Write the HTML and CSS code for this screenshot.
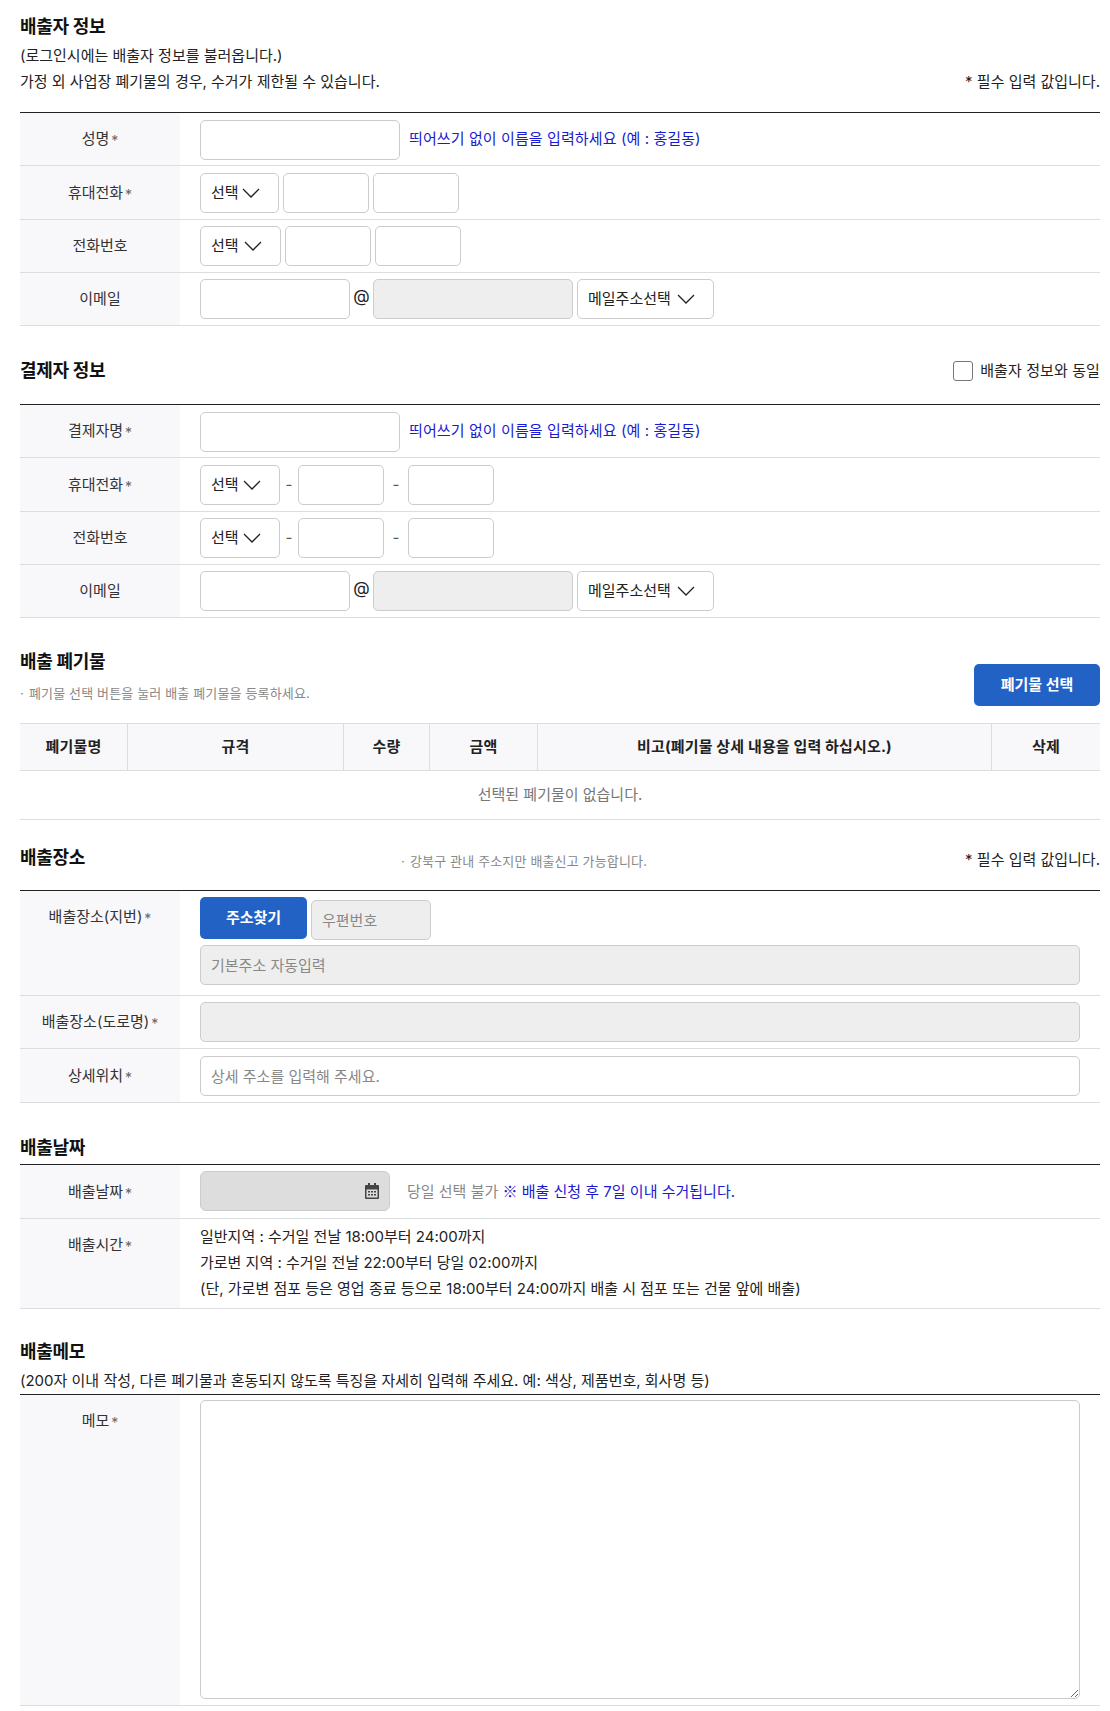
FILE: index.html
```html
<!DOCTYPE html>
<html lang="ko">
<head>
  <meta charset="utf-8">
  <title>배출 신청</title>
  <link rel="stylesheet" href="styles.css">
</head>
<body>
  <!-- 배출자 정보 -->
  <section class="sec sec-first">
    <h2 class="sec-title">배출자 정보</h2>
    <p class="sec-text">(로그인시에는 배출자 정보를 불러옵니다.)</p>
    <div class="sec-note">
      <p class="sec-text">가정 외 사업장 폐기물의 경우, 수거가 제한될 수 있습니다.</p>
      <p class="sec-text">* 필수 입력 값입니다.</p>
    </div>
  </section>
  <div class="form-table">
    <div class="row row-a">
      <div class="row-label">성명<span class="star">*</span></div>
      <div class="row-field">
        <input class="inp w-200" type="text">
        <span class="hint">띄어쓰기 없이 이름을 입력하세요 (예 : 홍길동)</span>
      </div>
    </div>
    <div class="row row-b">
      <div class="row-label">휴대전화<span class="star">*</span></div>
      <div class="row-field gap-4">
        <div class="sel w-79">선택<svg class="chev" viewBox="0 0 18 10"><path d="M1 1l8 8 8-8"/></svg></div>
        <input class="inp w-86" type="text">
        <input class="inp w-86" type="text">
      </div>
    </div>
    <div class="row">
      <div class="row-label">전화번호</div>
      <div class="row-field gap-4">
        <div class="sel w-81">선택<svg class="chev" viewBox="0 0 18 10"><path d="M1 1l8 8 8-8"/></svg></div>
        <input class="inp w-86" type="text">
        <input class="inp w-86" type="text">
      </div>
    </div>
    <div class="row">
      <div class="row-label">이메일</div>
      <div class="row-field">
        <input class="inp w-150" type="text">
        <span class="at">@</span>
        <input class="inp inp-off w-200" type="text" disabled>
        <div class="sel w-137 ml-4">메일주소선택<svg class="chev" viewBox="0 0 18 10"><path d="M1 1l8 8 8-8"/></svg></div>
      </div>
    </div>
  </div>

  <!-- 결제자 정보 -->
  <section class="sec sec-payer">
    <h2 class="sec-title">결제자 정보</h2>
    <label class="same"><span class="check"></span>배출자 정보와 동일</label>
  </section>
  <div class="form-table">
    <div class="row row-a">
      <div class="row-label">결제자명<span class="star">*</span></div>
      <div class="row-field">
        <input class="inp w-200" type="text">
        <span class="hint">띄어쓰기 없이 이름을 입력하세요 (예 : 홍길동)</span>
      </div>
    </div>
    <div class="row row-b">
      <div class="row-label">휴대전화<span class="star">*</span></div>
      <div class="row-field">
        <div class="sel w-80">선택<svg class="chev" viewBox="0 0 18 10"><path d="M1 1l8 8 8-8"/></svg></div>
        <span class="dash">-</span>
        <input class="inp w-86" type="text">
        <span class="dash dash-wide">-</span>
        <input class="inp w-86" type="text">
      </div>
    </div>
    <div class="row">
      <div class="row-label">전화번호</div>
      <div class="row-field">
        <div class="sel w-80">선택<svg class="chev" viewBox="0 0 18 10"><path d="M1 1l8 8 8-8"/></svg></div>
        <span class="dash">-</span>
        <input class="inp w-86" type="text">
        <span class="dash dash-wide">-</span>
        <input class="inp w-86" type="text">
      </div>
    </div>
    <div class="row">
      <div class="row-label">이메일</div>
      <div class="row-field">
        <input class="inp w-150" type="text">
        <span class="at">@</span>
        <input class="inp inp-off w-200" type="text" disabled>
        <div class="sel w-137 ml-4">메일주소선택<svg class="chev" viewBox="0 0 18 10"><path d="M1 1l8 8 8-8"/></svg></div>
      </div>
    </div>
  </div>

  <!-- 배출 폐기물 -->
  <section class="sec sec-waste">
    <div>
      <h2 class="sec-title">배출 폐기물</h2>
      <p class="sec-sub"><span class="dot">·</span>폐기물 선택 버튼을 눌러 배출 폐기물을 등록하세요.</p>
    </div>
    <button class="btn btn-waste" type="button">폐기물 선택</button>
  </section>
  <div class="list-head">
    <div class="col c-name">폐기물명</div>
    <div class="col c-spec">규격</div>
    <div class="col c-qty">수량</div>
    <div class="col c-price">금액</div>
    <div class="col c-note">비고(폐기물 상세 내용을 입력 하십시오.)</div>
    <div class="col c-del">삭제</div>
  </div>
  <div class="list-empty">선택된 폐기물이 없습니다.</div>

  <!-- 배출장소 -->
  <section class="sec sec-place">
    <h2 class="sec-title">배출장소</h2>
    <p class="sec-sub place-sub"><span class="dot">·</span>강북구 관내 주소지만 배출신고 가능합니다.</p>
    <p class="sec-text">* 필수 입력 값입니다.</p>
  </section>
  <div class="form-table">
    <div class="row row-top">
      <div class="row-label">배출장소(지번)<span class="star">*</span></div>
      <div class="row-field field-stack">
        <div class="addr-line">
          <button class="btn btn-addr" type="button">주소찾기</button>
          <input class="inp inp-off w-120" type="text" placeholder="우편번호" disabled>
        </div>
        <input class="inp inp-off w-full" type="text" placeholder="기본주소 자동입력" disabled>
      </div>
    </div>
    <div class="row">
      <div class="row-label">배출장소(도로명)<span class="star">*</span></div>
      <div class="row-field"><input class="inp inp-off w-full" type="text" disabled></div>
    </div>
    <div class="row row-b">
      <div class="row-label">상세위치<span class="star">*</span></div>
      <div class="row-field"><input class="inp w-full" type="text" placeholder="상세 주소를 입력해 주세요."></div>
    </div>
  </div>

  <!-- 배출날짜 -->
  <section class="sec sec-date">
    <h2 class="sec-title">배출날짜</h2>
  </section>
  <div class="form-table">
    <div class="row row-c">
      <div class="row-label">배출날짜<span class="star">*</span></div>
      <div class="row-field">
        <div class="date-box">
          <svg class="cal" viewBox="0 0 14 16">
            <path d="M3 0h2v2h4V0h2v2h2a1 1 0 0 1 1 1v12a1 1 0 0 1-1 1H1a1 1 0 0 1-1-1V3a1 1 0 0 1 1-1h2z" fill="#444"/>
            <path d="M1.5 6.5h11v8h-11z" fill="#ddd"/>
            <path d="M3 8h2v1.5H3zM6 8h2v1.5H6zM9 8h2v1.5H9zM3 11h2v1.5H3zM6 11h2v1.5H6zM9 11h2v1.5H9z" fill="#444"/>
          </svg>
        </div>
        <span class="date-hint">당일 선택 불가 <em><span class="ref-mark">※</span> 배출 신청 후 7일 이내 수거됩니다.</em></span>
      </div>
    </div>
    <div class="row row-top">
      <div class="row-label label-time">배출시간<span class="star">*</span></div>
      <div class="row-field time-text">
        <p>일반지역 : 수거일 전날 18:00부터 24:00까지</p>
        <p>가로변 지역 : 수거일 전날 22:00부터 당일 02:00까지</p>
        <p>(단, 가로변 점포 등은 영업 종료 등으로 18:00부터 24:00까지 배출 시 점포 또는 건물 앞에 배출)</p>
      </div>
    </div>
  </div>

  <!-- 배출메모 -->
  <section class="sec sec-memo">
    <h2 class="sec-title">배출메모</h2>
    <p class="sec-text">(200자 이내 작성, 다른 폐기물과 혼동되지 않도록 특징을 자세히 입력해 주세요. 예: 색상, 제품번호, 회사명 등)</p>
  </section>
  <div class="form-table">
    <div class="row row-top">
      <div class="row-label label-memo">메모<span class="star">*</span></div>
      <div class="row-field field-memo"><textarea class="memo"></textarea></div>
    </div>
  </div>
</body>
</html>
```

FILE: styles.css
```css
* {
  box-sizing: border-box;
}

body {
  margin: 0;
  padding: 0 10px 0 20px;
  color: #222;
  background: #fff;
  font-family: Inter, "Noto Sans CJK KR", sans-serif;
  font-size: 15px;
  line-height: 26px;
}

p {
  margin: 0;
}

/* section headings */
.sec-title {
  margin: 0;
  font-size: 18px;
  font-weight: 700;
  line-height: 26px;
  letter-spacing: -0.3px;
  color: #111;
}

.sec-first {
  padding-top: 14px;
  height: 112px;
}

.sec-first .sec-title {
  margin-bottom: 3px;
}

.sec-note {
  display: flex;
  justify-content: space-between;
}

.sec-text {
  font-size: 15px;
  line-height: 26px;
}

.sec-sub {
  font-size: 13px;
  line-height: 20px;
  letter-spacing: 0.15px;
  color: #888;
}

.dot {
  margin-right: 5px;
}

.sec-payer {
  display: flex;
  justify-content: space-between;
  align-items: center;
  height: 78px;
  padding-top: 11px;
}

.same {
  display: flex;
  align-items: center;
  gap: 7px;
  letter-spacing: 0.1px;
}

.check {
  width: 20px;
  height: 20px;
  border: 1px solid #777;
  border-radius: 3px;
}

.sec-waste {
  display: flex;
  justify-content: space-between;
  height: 105px;
  padding-top: 31px;
}

.sec-waste .sec-title {
  margin-bottom: 8px;
}

.sec-place {
  display: flex;
  justify-content: space-between;
  align-items: center;
  height: 70px;
  padding-top: 6px;
}

.sec-place .sec-text {
  padding-top: 4px;
}

.place-sub {
  margin-left: -2px;
  padding-top: 6px;
}

.sec-date {
  height: 61px;
  padding-top: 32px;
}

.sec-memo {
  height: 85px;
  padding-top: 30px;
}

.sec-memo .sec-title {
  margin-bottom: 3px;
}

/* form rows */
.form-table {
  border-top: 1px solid #222;
}

.row {
  display: flex;
  border-bottom: 1px solid #ddd;
}

.row-label {
  flex: none;
  display: flex;
  justify-content: center;
  align-items: center;
  width: 160px;
  background: #f8f8fb;
  color: #333;
}

.star {
  margin-left: 2px;
  font-size: 14px;
  color: #666;
  transform: translateY(2px);
}

.row-field {
  flex: 1;
  display: flex;
  align-items: center;
  min-width: 0;
  padding: 6px 20px;
}

.row-a .row-field {
  padding: 7px 20px 5px;
}

.row-b .row-field {
  padding: 7px 20px 6px;
}

.row-c .row-field {
  padding: 6px 20px 7px;
}

.row-top .row-label {
  align-items: flex-start;
  padding-top: 13px;
}

.gap-4 {
  gap: 4px;
}

.ml-4 {
  margin-left: 4px;
}

.w-79 { width: 79px; }
.w-80 { width: 80px; }
.w-81 { width: 81px; }
.w-86 { width: 86px; }
.w-120 { width: 120px; }
.w-137 { width: 137px; }
.w-150 { width: 150px; }
.w-200 { width: 200px; }
.w-full { width: 100%; }

.inp {
  flex: none;
  height: 40px;
  padding: 0 10px;
  border: 1px solid #ccc;
  border-radius: 5px;
  background: #fff;
  font: inherit;
  color: #222;
}

.inp::placeholder {
  color: #888;
  opacity: 1;
}

.inp-off {
  background: #eee;
}

.sel {
  flex: none;
  display: flex;
  align-items: center;
  justify-content: space-between;
  height: 40px;
  padding: 0 18px 0 10px;
  border: 1px solid #ccc;
  border-radius: 5px;
  background: #fff;
  color: #222;
}

.chev {
  flex: none;
  width: 18px;
  height: 10px;
}

.chev path {
  fill: none;
  stroke: #222;
  stroke-width: 1.3;
}

.hint {
  margin-left: 9px;
  letter-spacing: 0.1px;
  color: #1a1ad0;
  transform: translateY(-1px);
}

.at {
  width: 23px;
  font-size: 17px;
  text-align: center;
  transform: translateY(-3px);
}

.dash {
  width: 18px;
  text-align: center;
  color: #555;
}

.dash-wide {
  width: 24px;
}

/* waste list */
.btn {
  border: 0;
  border-radius: 5px;
  background: #2262c4;
  color: #fff;
  font: inherit;
  font-weight: 700;
}

.btn-waste {
  width: 126px;
  height: 42px;
  margin-top: 15px;
}

.list-head {
  display: flex;
  height: 48px;
  border-top: 1px solid #ddd;
  border-bottom: 1px solid #ddd;
  background: #f8f8fb;
  font-weight: 700;
  letter-spacing: 0.15px;
}

.col {
  display: flex;
  align-items: center;
  justify-content: center;
  border-right: 1px solid #ddd;
}

.c-name { width: 108px; }
.c-spec { width: 216px; }
.c-qty { width: 86px; }
.c-price { width: 108px; }
.c-note { width: 454px; }
.c-del { flex: 1; border-right: 0; }

.list-empty {
  height: 49px;
  padding-top: 11px;
  border-bottom: 1px solid #ddd;
  text-align: center;
  color: #777;
}

/* address */
.field-stack {
  display: block;
  padding-bottom: 10px;
}

.addr-line {
  display: flex;
  align-items: flex-end;
  gap: 4px;
  margin-bottom: 5px;
}

.btn-addr {
  width: 107px;
  height: 42px;
  margin-bottom: 1px;
}

/* date */
.date-box {
  flex: none;
  display: flex;
  justify-content: flex-end;
  align-items: center;
  width: 190px;
  height: 40px;
  padding-right: 10px;
  border: 1px solid #ccc;
  border-radius: 6px;
  background: #ddd;
}

.cal {
  width: 14px;
  height: 16px;
}

.date-hint {
  margin-left: 17px;
  color: #888;
}

.date-hint em {
  font-style: normal;
  color: #1a1ad0;
}

.ref-mark {
  font-family: "Noto Sans CJK KR", sans-serif;
}

.row-field.time-text {
  display: block;
  padding: 5px 20px 6px;
}

/* memo */
.field-memo {
  padding: 5px 20px 6px;
}

.memo {
  display: block;
  width: 100%;
  height: 299px;
  border: 1px solid #ccc;
  border-radius: 5px;
  background: #fff;
}
```
